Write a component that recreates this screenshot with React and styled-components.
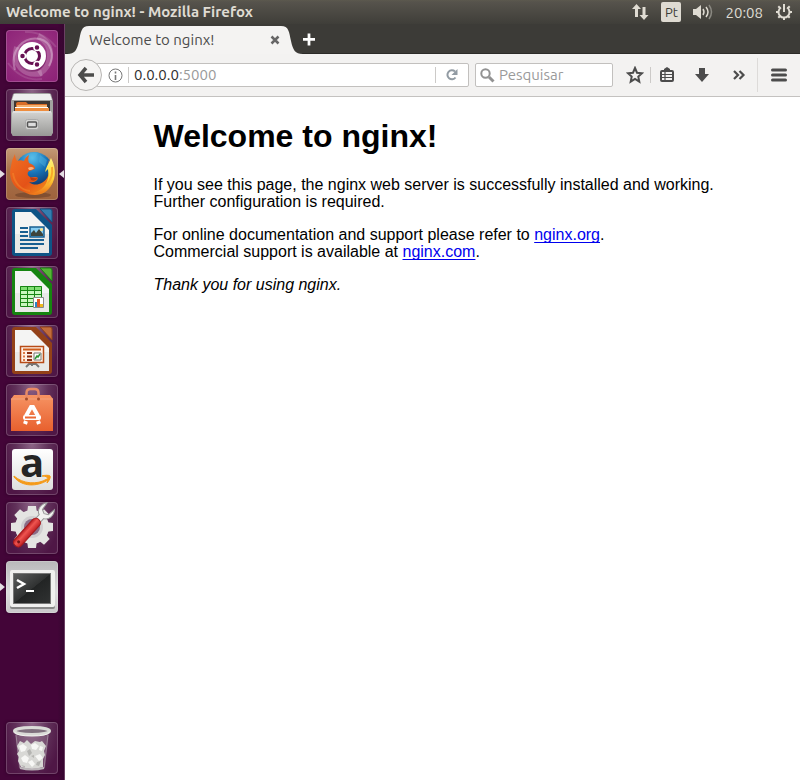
import React from "react";
import styled, { createGlobalStyle } from "styled-components";

const GlobalStyle = createGlobalStyle`
  * { box-sizing: border-box; }
  body { margin: 0; background: #fff; }
  button { font: inherit; }
`;

const uiFont = `"Ubuntu", "Noto Sans", "Open Sans", sans-serif`;

const Desktop = styled.div`
  min-height: 100vh;
  display: grid;
  grid-template: 24px 1fr / 65px 1fr;
  font-family: ${uiFont};
`;

const TopPanel = styled.header`
  grid-column: 1 / -1;
  display: flex;
  align-items: center;
  justify-content: space-between;
  padding: 0 7px 0 6px;
  color: #dfdbd2;
  background: linear-gradient(#5c594e 0, #56534c 2px, #3f3e39 100%);
`;

const WindowTitle = styled.span`
  font-size: 15px;
  line-height: 20px;
  font-weight: 700;
  white-space: nowrap;
`;

const Indicators = styled.div`
  display: flex;
  align-items: center;
  gap: 12px;
`;

const IndicatorButton = styled.button`
  display: flex;
  align-items: center;
  justify-content: center;
  height: 20px;
  min-width: ${(p) => (p.$filled ? "20px" : "18px")};
  padding: 0;
  border: 0;
  border-radius: 2px;
  background: ${(p) => (p.$filled ? "#dfdbd2" : "transparent")};
  color: ${(p) => (p.$filled ? "#3c3b37" : "#dfdbd2")};
  font-size: ${(p) => (p.$filled ? "13px" : "15px")};
`;

const Launcher = styled.nav`
  display: flex;
  flex-direction: column;
  gap: 7px;
  padding: 6px 0;
  background: linear-gradient(90deg, #430538 0, #430538 90%, #360630 100%);
  border-right: 1px solid #6b3f63;
`;

const LauncherRow = styled.div`
  display: grid;
  grid-template-columns: 6px 52px 6px;
  align-items: center;
  margin-top: ${(p) => (p.$last ? "auto" : "0")};
`;

const Pip = styled.span`
  grid-column: ${(p) => (p.$right ? 3 : 1)};
  grid-row: 1;
  justify-self: ${(p) => (p.$right ? "end" : "start")};
  border: 4px solid transparent;
  border-left: ${(p) => (p.$right ? "0" : "5px solid #e4dde3")};
  border-right: ${(p) => (p.$right ? "5px solid #e4dde3" : "0")};
`;

const tileFill = {
  dash: "radial-gradient(circle at 50% 45%, #b45da4 0, #96307f 45%, #8b1f76 100%)",
  firefox: "linear-gradient(#c39a76 0, #a97049 45%, #9e633d 100%)",
  terminal: "linear-gradient(#b9b8ba, #dcdbdd 60%, #c9c8ca)",
  plain: "radial-gradient(ellipse at 50% 0, #8d6487 0, #603059 45%, #4f1746 80%)",
};

const LauncherButton = styled.button`
  grid-column: 2;
  grid-row: 1;
  display: block;
  width: 52px;
  height: 52px;
  padding: 0;
  border: 0;
  border-radius: 4px;
  background: ${(p) => tileFill[p.$fill]};
  box-shadow: inset 0 0 0 1px #ffffff30, 0 0 3px #2a0224;

  svg { display: block; overflow: visible; }
`;

const Browser = styled.main`
  display: flex;
  flex-direction: column;
  min-width: 0;
  background: #fff;
`;

const TabStrip = styled.div`
  display: flex;
  align-items: flex-end;
  height: 30px;
  padding-left: 2px;
  background: #3c3b37;
  border-bottom: 1px solid #2c2b28;
`;

const Tab = styled.div`
  display: flex;
  height: 28px;
  margin-bottom: -1px;

  > svg { display: block; }
`;

const TabBody = styled.div`
  display: flex;
  align-items: center;
  justify-content: space-between;
  width: 192px;
  background: #f4f3f2;
  color: #4c4c4c;
`;

const TabLabel = styled.span`
  font-size: 15px;
  line-height: 20px;
  white-space: nowrap;
`;

const TabAction = styled.button`
  display: flex;
  align-items: center;
  justify-content: center;
  width: 12px;
  height: 28px;
  padding: 0;
  border: 0;
  background: none;
`;

const NavBar = styled.div`
  display: flex;
  align-items: center;
  height: 43px;
  padding-left: 5px;
  background: #f3f2f1;
  border-bottom: 1px solid #c4c2c0;
`;

const BackButton = styled.button`
  position: relative;
  z-index: 1;
  flex: none;
  display: flex;
  align-items: center;
  justify-content: center;
  width: 32px;
  height: 32px;
  padding: 0;
  border: 1px solid #b8b6b4;
  border-radius: 50%;
  background: #f5f4f3;
`;

const Field = styled.form`
  display: flex;
  align-items: center;
  height: 24px;
  background: #fff;
  border: 1px solid #c2c0be;
  border-radius: 2px;
  min-width: 0;
`;

const AddressField = styled(Field)`
  flex: 1;
  margin-left: -6px;
  padding-left: 11px;
`;

const SearchField = styled(Field)`
  flex: 0 1 138px;
  margin: 0 7px 0 6px;
  padding-left: 4px;
`;

const Separator = styled.span`
  flex: none;
  width: 1px;
  height: ${(p) => (p.$tall ? "34px" : "16px")};
  background: ${(p) => (p.$tall ? "#dddbd9" : "#cccac8")};
`;

const Address = styled.label`
  display: grid;
  flex: 1;
  min-width: 0;
  margin-left: 5px;
  font-size: 15px;
  line-height: 20px;
`;

const AddressInput = styled.input`
  grid-area: 1 / 1;
  width: 100%;
  padding: 0;
  border: 0;
  outline: 0;
  background: none;
  font: inherit;
  color: transparent;
  caret-color: #333;
`;

const AddressText = styled.span`
  grid-area: 1 / 1;
  pointer-events: none;
  white-space: nowrap;
  color: #9a9a9a;

  b { font-weight: 400; color: #2e2e2e; }
`;

const SearchInput = styled.input`
  flex: 1;
  min-width: 0;
  margin-left: 4px;
  padding: 0;
  border: 0;
  outline: 0;
  background: none;
  font: 15px/20px ${uiFont};
  color: #333;

  &::placeholder { color: #9a9a9a; opacity: 1; }
`;

const IconButton = styled.button`
  flex: none;
  display: flex;
  align-items: center;
  justify-content: center;
  width: ${(p) => p.$width || 36}px;
  height: 22px;
  padding: 0;
  border: 0;
  background: none;
`;

const InfoButton = styled(IconButton)`
  width: 15px;
  margin-right: 5px;
`;

const Page = styled.article`
  width: 100%;
  max-width: 566px;
  margin: 0 auto;
  padding-left: 4px;
  color: #000;
  font: 16px/17px "Liberation Sans", Arial, sans-serif;
`;

const PageTitle = styled.h1`
  margin: 21px 0;
  font-size: 32px;
  line-height: 37px;
`;

const Paragraph = styled.p`
  margin: 0 0 16px;
`;

const PageLink = styled.a`
  color: #0000ee;
  text-underline-offset: 2px;
  text-decoration-skip-ink: none;
`;

const Art = ({ children }) => (
  <svg width="52" height="52" viewBox="0 0 52 52" aria-hidden="true">{children}</svg>
);

const DashIcon = () => (
  <Art>
    <g fill="none" stroke="#fff">
      <path d="M9 40C3 20 18 6 34 9c11 3 15 16 9 27" opacity=".3" strokeWidth="2" />
      <path d="M32 6c17 9 15 29 1 38" opacity=".2" strokeWidth="6" />
      <path d="M11 17c-5 17 7 30 25 26" opacity=".2" strokeWidth="6" />
      <path d="M2 33c9 12 21 18 34 16M19 2c13-1 23 5 31 15" opacity=".12" strokeWidth="2" />
    </g>
    <circle cx="26" cy="27.5" r="14.5" fill="#5f1451" opacity=".35" />
    <circle cx="26" cy="26" r="14" fill="#fff" />
    <circle cx="26" cy="26" r="7.5" fill="none" stroke="#671052" strokeWidth="3" />
    <g stroke="#fff" strokeWidth="1.5" fill="#671052">
      <circle cx="16.5" cy="26" r="3" />
      <circle cx="31" cy="17.5" r="3" />
      <circle cx="31" cy="34.5" r="3" />
    </g>
  </Art>
);

const FilesIcon = () => (
  <Art>
    <defs>
      <linearGradient id="cabinet" x2="0" y2="1"><stop stopColor="#d5d5d3" /><stop offset="1" stopColor="#989896" /></linearGradient>
    </defs>
    <path d="M7 5q1-1 3-1h32q2 0 3 1l2 7v32l-2 3H7l-2-3V12z" fill="#a2a2a0" />
    <path d="M8 5h36l2 6H6z" fill="#eee" />
    <path d="M8 12h36v11H8z" fill="#3d3734" />
    <path d="M10 15q0-2 2-2h8l2 2h19v8H10z" fill="#d86d28" />
    <path d="M11 16h30v2H11z" fill="#f5b271" />
    <path d="M9 18h33v3H9z" fill="#fff" />
    <path d="M9 19h34v4H9z" fill="#ee8d3e" />
    <path d="M7 22h38l1 2v21q0 2-2 2H8q-2 0-2-2V24z" fill="url(#cabinet)" />
    <path d="M7 23h38" stroke="#eee" />
    <rect x="19.5" y="30.5" width="13" height="10" rx="2" fill="#d5d5d3" stroke="#aaa" />
    <rect x="21.5" y="33" width="9" height="5" rx="1" fill="#ddd" stroke="#555" strokeWidth="1.5" />
  </Art>
);

const FirefoxIcon = () => (
  <Art>
    <defs>
      <radialGradient id="globe" cx=".45" cy=".15" r=".8"><stop stopColor="#58c1ee" /><stop offset=".5" stopColor="#1773b7" /><stop offset="1" stopColor="#103164" /></radialGradient>
      <linearGradient id="fox" x2="1" y2="1"><stop stopColor="#f07022" /><stop offset=".55" stopColor="#e45218" /><stop offset="1" stopColor="#f5a11d" /></linearGradient>
      <linearGradient id="tail" x2="0" y2="1"><stop stopColor="#fff17a" /><stop offset=".55" stopColor="#ffd637" /><stop offset="1" stopColor="#ee731a" /></linearGradient>
    </defs>
    <ellipse cx="27" cy="47" rx="18" ry="3" fill="#532f1d" opacity=".4" />
    <circle cx="28" cy="23" r="19" fill="url(#globe)" />
    <path d="M20 8q6-5 12-3l-3 5-7 2zM34 7l7 5-2 7-6-5z" fill="#55b7e2" opacity=".4" />
    <path d="M9 6c0 3 1 5 2 7 2-1 5-1 7 0 1-3 3-5 5-6-1 3-1 6 0 8 3 1 6 3 6 5s-5 2-7 4c-1 2 0 4 2 5 4 1 6-1 8 1-1 4-6 5-9 4 6 5 14 2 18-4 3-5 3-11 1-18 5 7 8 16 4 24-5 11-18 14-28 8C6 40 2 28 5 18q1-7 4-12z" fill="url(#fox)" />
    <path d="M45 10c6 11 5 24-3 31-6 5-13 6-20 5 11-1 18-7 20-16 1-3 0-6 0-9l-3 3c1-5 4-9 6-14z" fill="url(#tail)" />
    <path d="M46 19c1 7-1 13-5 17" fill="none" stroke="#f9a92a" strokeWidth="2" />
    <path d="M22 20q3-2 6 0-1 2-5 2z" fill="#f9b27c" />
    <path d="M7 25c1 10 8 17 17 18" fill="none" stroke="#f48429" strokeWidth="2" opacity=".6" />
    <path d="M24 29q4 2 8 1-3 4-7 2z" fill="#80240d" opacity=".5" />
  </Art>
);

const DocumentArt = ({ color, tint, children }) => (
  <Art>
    <path d="M9 2h19l18 18v26q0 3-3 3H9q-3 0-3-3V5q0-3 3-3z" fill={color} />
    <path d="M9 5h16l18 18v23H9z" fill="#f4f4f3" />
    <path d="M9 27h34v19H9z" fill="#dddddc" opacity=".5" />
    <path d="M26 2h4l16 16v5z" fill={color} />
    <path d="M34 2h10q2 0 2 2v11z" fill={tint} stroke={color} strokeWidth="1" />
    {children}
  </Art>
);

const WriterIcon = () => (
  <DocumentArt color="#0e5486" tint="#347eaf">
    <path d="M14 21h8M14 25h8M14 29h8M14 33h24M14 37h24M14 41h18" stroke="#185f91" strokeWidth="2" />
    <path d="M24 20h14v10H24z" fill="#86cdf2" stroke="#185f91" strokeWidth="1.5" />
    <path d="M25 29v-3l3-3 2 3 3-4 4 5v2z" fill="#3d443c" />
    <circle cx="35.5" cy="22.5" r="1.5" fill="#ffe48a" />
  </DocumentArt>
);

const CalcIcon = () => (
  <DocumentArt color="#168410" tint="#56b536">
    <path d="M14 20h22v21H14z" fill="#c9f7bf" />
    <path d="M14 20h22v4H14z" fill="#81df72" />
    <path d="M14.5 20.5h21v20h-21zM14 24.5h22M14 28.5h22M14 32.5h22M14 36.5h22M21.5 20v21M28.5 20v21" fill="none" stroke="#188514" />
    <path d="M27.5 31.5h10v10h-10z" fill="#fff" stroke="#888" />
    <path d="M29 36h2v5h-2z" fill="#2c84c8" /><path d="M31 33h3v8h-3z" fill="#e65722" /><path d="M34 38h3v3h-3z" fill="#eeb91b" />
  </DocumentArt>
);

const ImpressIcon = () => (
  <DocumentArt color="#934118" tint="#c16c3b">
    <path d="M20 42l3-3h7l3 3M26 38v3" fill="none" stroke="#777" strokeWidth="2" />
    <path d="M14.5 21.5h23v16h-23z" fill="#fff2e7" stroke="#b84b17" strokeWidth="1.5" />
    <path d="M17 24.5h18" stroke="#cf5d1b" strokeWidth="2" />
    <path d="M17 28h2M17 31.5h2M17 35h2" stroke="#dd7c46" strokeWidth="2" />
    <path d="M21 28h5M21 31.5h5M21 35h5" stroke="#8b3013" strokeWidth="2" />
    <path d="M28 28h7v7h-7z" fill="#fff" stroke="#777" />
    <path d="M29 34l2-3 1 1 2-3" fill="none" stroke="#2b9432" strokeWidth="1.5" />
  </DocumentArt>
);

const SoftwareIcon = () => (
  <Art>
    <defs><linearGradient id="bag" x2="0" y2="1"><stop stopColor="#f69363" /><stop offset="1" stopColor="#e8602e" /></linearGradient></defs>
    <path d="M8 11h36l3 4v32H5V15z" fill="url(#bag)" />
    <path d="M5 15h42" stroke="#f1a47d" />
    <path d="M20.5 15V9q0-4 4-4h4q4 0 4 4v6" fill="none" stroke="#e98b65" strokeWidth="2.500" />
    <circle cx="20.500" cy="15" r="1.500" fill="#a14a2a" /><circle cx="32.500" cy="15" r="1.500" fill="#a14a2a" />
    <path d="M20 32l5-9h2l5 9M19 40l1-3M33 40l-1-3" fill="none" stroke="#fff" strokeWidth="4" />
    <rect x="17" y="31" width="18" height="5" rx="2" fill="#fff" />
    <path d="M19 33.500h11" stroke="#eb6935" strokeWidth="2" />
  </Art>
);

const AmazonLetter = styled.text`
  font: 700 40px "Open Sans", sans-serif;
  fill: #252525;
`;

const AmazonIcon = () => (
  <Art>
    <defs><linearGradient id="card" x2="0" y2="1"><stop stopColor="#fff" /><stop offset="1" stopColor="#dededd" /></linearGradient></defs>
    <rect x="6" y="6" width="41" height="41" rx="3" fill="url(#card)" />
    <AmazonLetter x="26" y="34" textAnchor="middle">a</AmazonLetter>
    <path d="M8 33c9 8 23 9 33 3l1 1C31 44 16 44 8 34z" fill="#f59a18" stroke="#f59a18" />
    <path d="M36 33c3-1 7-1 8 0s-1 5-3 7c1-3 1-4 0-6q-2-1-5-1z" fill="#f59a18" stroke="#f59a18" />
  </Art>
);

const SettingsIcon = () => (
  <Art>
    <defs><linearGradient id="handle" x2="1"><stop stopColor="#b51b1f" /><stop offset=".4" stopColor="#ef5550" /><stop offset="1" stopColor="#c02023" /></linearGradient></defs>
    <g fill="#e4e4e2">
      {[0, 45, 90, 135, 180, 225, 270, 315].map((angle) => (
        <path key={angle} d="M21 12l1-8h8l1 8z" transform={`rotate(${angle} 26 25)`} />
      ))}
      <circle cx="26" cy="25" r="17" />
    </g>
    <circle cx="26" cy="25" r="11" fill="#d0ced0" />
    <circle cx="26" cy="25" r="8" fill="#8b6c87" />
    <g transform="rotate(42 26 25)">
      <path d="M23 20h6v-9c5-2 6-9 2-14l-1 8-4 2-4-2-1-8c-4 5-3 12 2 14z" fill="#f2f2f0" stroke="#999" />
      <rect x="21.5" y="15" width="9" height="35" rx="4" fill="url(#handle)" stroke="#a5191c" />
      <circle cx="26" cy="45" r="1.500" fill="#741417" />
    </g>
  </Art>
);

const TerminalIcon = () => (
  <Art>
    <defs><linearGradient id="screen" x2="1" y2="1"><stop stopColor="#5b5d5d" /><stop offset=".5" stopColor="#303232" /><stop offset=".51" stopColor="#222424" /><stop offset="1" stopColor="#303232" /></linearGradient></defs>
    <rect x="4" y="10" width="45" height="38" rx="2" fill="#888" />
    <rect x="4" y="9" width="45" height="37" rx="2" fill="#f0f0ef" />
    <rect x="7" y="12" width="38" height="31" fill="#777" />
    <rect x="8" y="13" width="36" height="29" fill="url(#screen)" />
    <path d="M11 19l7 4-7 4" fill="none" stroke="#fff" strokeWidth="2.500" />
    <path d="M20 30h8" stroke="#fff" strokeWidth="2" />
  </Art>
);

const TrashIcon = () => (
  <Art>
    <path d="M9 10h34l-4 36q-13 4-26 0z" fill="#c2b6c1" opacity=".25" />
    <path d="M10 13l4 33q12 3 24 0l4-33" fill="none" stroke="#bfb4be" opacity=".5" />
    <path d="M11 24l3-5 4 2 3-3 4 4 4-3 5 1 2-1 4 5-2 5 1 4-2 4v8q-11 4-22 0l-3-6 1-4-2-3 2-3z" fill="#d8d8d5" />
    <path d="M13 24l4-2 4 3-2 4-4 1zM25 23l4-2 4 3-3 4-4-1zM15 36l4-3 4 3-2 5-4-1zM29 34l5-2 3 4-4 3zM22 40l4-2 3 4-3 3zM34 24l3 1-1 4-3-1z" fill="#f7f7f5" />
    <path d="M21 29l3-2 2 4-3 3zM31 40l4-1-2 5-3-1zM25 34l3-1v3zM15 43l4 1v2z" fill="#b5b5b2" />
    <ellipse cx="26" cy="9" rx="17.500" ry="3.500" fill="#80707e" stroke="#dadbd7" strokeWidth="3" />
    <path d="M8.5 10q2 4 17.500 4t17.500-4" fill="none" stroke="#f4f4f1" />
    <path d="M14 46q12 3 24 0" fill="none" stroke="#bbb5b9" strokeWidth="2" />
  </Art>
);

const apps = [
  { name: "Dash", icon: DashIcon, fill: "dash" },
  { name: "Files", icon: FilesIcon },
  { name: "Firefox", icon: FirefoxIcon, fill: "firefox", running: true, focused: true },
  { name: "LibreOffice Writer", icon: WriterIcon },
  { name: "LibreOffice Calc", icon: CalcIcon },
  { name: "LibreOffice Impress", icon: ImpressIcon },
  { name: "Ubuntu Software", icon: SoftwareIcon },
  { name: "Amazon", icon: AmazonIcon },
  { name: "System Settings", icon: SettingsIcon },
  { name: "Terminal", icon: TerminalIcon, fill: "terminal", running: true },
  { name: "Trash", icon: TrashIcon, last: true },
];

const Glyph = ({ w = 18, h = 18, children }) => (
  <svg width={w} height={h} viewBox={`0 0 ${w} ${h}`} aria-hidden="true">{children}</svg>
);

const TabEdge = ({ flip }) => (
  <Glyph w={22} h={28}>
    <path transform={flip ? "translate(22) scale(-1 1)" : undefined} d="M0 28C8 28 10 24 12 15S14 0 22 0v28z" fill="#f4f3f2" />
  </Glyph>
);

export default function App() {
  return (
    <>
      <GlobalStyle />
      <Desktop>
        <TopPanel>
          <WindowTitle>Welcome to nginx! - Mozilla Firefox</WindowTitle>
          <Indicators>
            <IndicatorButton aria-label="Network">
              <Glyph>
                <path d="M5.500 1L10 6H7v8H4V6H1zM13 17l-4.500-5H11.500V4h3v8H17.500z" fill="currentColor" />
              </Glyph>
            </IndicatorButton>
            <IndicatorButton $filled>Pt</IndicatorButton>
            <IndicatorButton aria-label="Sound">
              <Glyph w={20}>
                <path d="M0 6h3l5-4v14l-5-4H0z" fill="currentColor" />
                <path d="M10 6q2 3 0 6M13 4q4 5 0 10" fill="none" stroke="currentColor" strokeWidth="1.500" />
                <path d="M16 2q5 7 0 14" fill="none" stroke="#8b8982" strokeWidth="1.500" />
              </Glyph>
            </IndicatorButton>
            <IndicatorButton>20:08</IndicatorButton>
            <IndicatorButton aria-label="Session">
              <Glyph>
                <path d="M6 4.500a5.500 5.500 0 1 0 6 0" fill="none" stroke="currentColor" strokeWidth="2" />
                <path d="M9 1v8M9 14.500V17M1 9h2.500M14.500 9H17M3.300 14.700L5 13M13 13l1.700 1.700M3.300 3.300L5 5M13 5l1.700-1.700" stroke="currentColor" strokeWidth="2" />
              </Glyph>
            </IndicatorButton>
          </Indicators>
        </TopPanel>

        <Launcher aria-label="Launcher">
          {apps.map(({ name, icon: Icon, fill = "plain", running, focused, last }) => (
            <LauncherRow key={name} $last={last}>
              {running && <Pip />}
              <LauncherButton $fill={fill} aria-label={name}><Icon /></LauncherButton>
              {focused && <Pip $right />}
            </LauncherRow>
          ))}
        </Launcher>

        <Browser>
          <TabStrip>
            <Tab>
              <TabEdge />
              <TabBody>
                <TabLabel>Welcome to nginx!</TabLabel>
                <TabAction aria-label="Close tab">
                  <Glyph w={10} h={10}><path d="M1.500 1.500l7 7M8.500 1.500l-7 7" stroke="#666" strokeWidth="2.500" /></Glyph>
                </TabAction>
              </TabBody>
              <TabEdge flip />
            </Tab>
            <TabAction aria-label="New tab">
              <Glyph w={13} h={28}><path d="M0 14.500h13M6.500 8v13" stroke="#fff" strokeWidth="3" /></Glyph>
            </TabAction>
          </TabStrip>

          <NavBar>
            <BackButton aria-label="Back">
              <Glyph><path d="M17 9H4M9 2L3 9l6 7" fill="none" stroke="#4c4c4c" strokeWidth="3.500" /></Glyph>
            </BackButton>
            <AddressField>
              <InfoButton type="button" aria-label="Site information">
                <Glyph w={15} h={15}>
                  <circle cx="7.500" cy="7.500" r="6.500" fill="none" stroke="#777" />
                  <path d="M7.500 3.500v2M7.500 7v5" stroke="#777" strokeWidth="1.600" />
                </Glyph>
              </InfoButton>
              <Separator />
              <Address>
                <AddressInput aria-label="Address" defaultValue="0.0.0.0:5000" />
                <AddressText aria-hidden="true"><b>0.0.0.0</b>:5000</AddressText>
              </Address>
              <Separator />
              <IconButton type="button" $width={32} aria-label="Reload">
                <Glyph w={14} h={14}>
                  <path d="M10.500 9.500A4.500 4.500 0 1 1 10 3.500" fill="none" stroke="#929ba3" strokeWidth="2" />
                  <path d="M12.500 1v6h-6z" fill="#929ba3" />
                </Glyph>
              </IconButton>
            </AddressField>
            <SearchField role="search">
              <Glyph w={15} h={15}>
                <circle cx="5.500" cy="5.500" r="4.200" fill="none" stroke="#929292" strokeWidth="2" />
                <path d="M9 9l4.500 4.500" stroke="#929292" strokeWidth="3" />
              </Glyph>
              <SearchInput aria-label="Pesquisar" placeholder="Pesquisar" />
            </SearchField>
            <IconButton $width={30} aria-label="Bookmark">
              <Glyph><path d="M9 2l2 4.700 5 .5-3.700 3.400 1 5L9 13l-4.300 2.600 1-5L2 7.200l5-.5z" fill="none" stroke="#4c4c4c" strokeWidth="2" /></Glyph>
            </IconButton>
            <Separator />
            <IconButton $width={32} aria-label="Bookmarks list">
              <Glyph>
                <path d="M6 5V3l3-2 3 2v2z" fill="#4c4c4c" />
                <rect x="3" y="5" width="12" height="10" rx="1" fill="none" stroke="#4c4c4c" strokeWidth="2" />
                <path d="M4 8.500h10M4 11.500h10M7 5v10" stroke="#4c4c4c" strokeWidth="1.200" />
              </Glyph>
            </IconButton>
            <IconButton $width={38} aria-label="Downloads">
              <Glyph><path d="M6 2h6v6h4l-7 8-7-8h4z" fill="#4c4c4c" /></Glyph>
            </IconButton>
            <IconButton $width={36} aria-label="More tools">
              <Glyph w={14} h={12}><path d="M2 2l4 4-4 4M7.500 2l4 4-4 4" fill="none" stroke="#4c4c4c" strokeWidth="2.200" /></Glyph>
            </IconButton>
            <Separator $tall />
            <IconButton aria-label="Menu" $width={42}>
              <Glyph><path d="M2.500 4h13M2.500 9h13M2.500 14h13" stroke="#4c4c4c" strokeWidth="3" strokeLinecap="round" /></Glyph>
            </IconButton>
          </NavBar>

          <Page>
            <PageTitle>Welcome to nginx!</PageTitle>
            <Paragraph>
              If you see this page, the nginx web server is successfully installed and working. Further configuration is required.
            </Paragraph>
            <Paragraph>
              For online documentation and support please refer to <PageLink href="http://nginx.org/">nginx.org</PageLink>.<br />
              Commercial support is available at <PageLink href="http://nginx.com/">nginx.com</PageLink>.
            </Paragraph>
            <Paragraph><em>Thank you for using nginx.</em></Paragraph>
          </Page>
        </Browser>
      </Desktop>
    </>
  );
}
